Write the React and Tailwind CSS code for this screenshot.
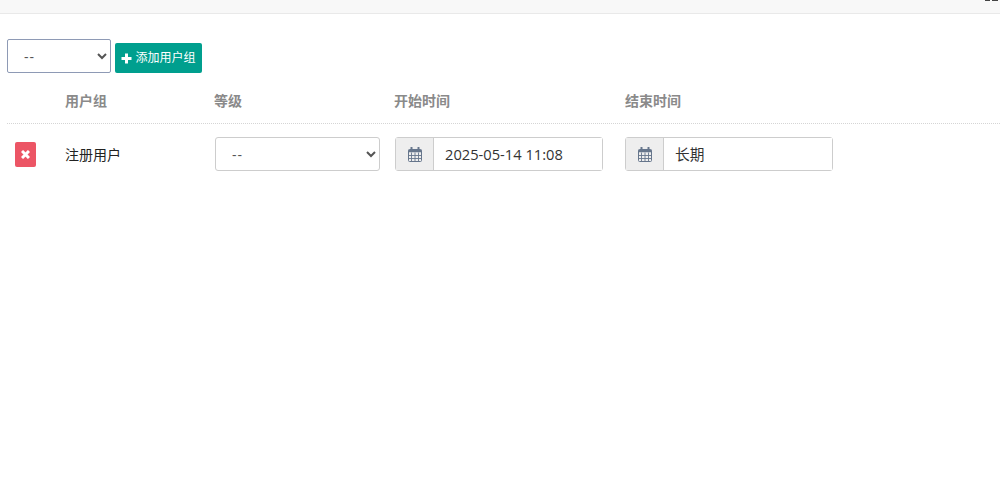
const font = "font-['Open_Sans','Noto_Sans_CJK_SC',sans-serif]"

function CalendarIcon() {
  return (
    <svg width="14" height="15" viewBox="0 0 14 15" fill="none" stroke="#66768c" strokeWidth="1">
      <rect x="0.5" y="2.5" width="13" height="12" rx="1" />
      <path d="M0.5 8.5h13M0.5 11.5h13M3.5 5.5v9M7 5.5v9M10.5 5.5v9" strokeWidth="0.9" />
      <path d="M0.5 4h13" strokeWidth="2.5" />
      <path d="M3.5 0.5v3M10.5 0.5v3" strokeWidth="2" strokeLinecap="round" />
    </svg>
  )
}

function DateField({ value }) {
  return (
    <div className="flex h-[34px] w-[208px] rounded-[3px] border border-[#cdcdcd] bg-white">
      <span className="flex w-[38px] shrink-0 items-center justify-center border-r border-[#cdcdcd] bg-[#eeeeee]">
        <CalendarIcon />
      </span>
      <input
        readOnly
        value={value}
        className="w-full min-w-0 bg-white px-[11px] text-[14.7px] text-[#333] outline-none"
      />
    </div>
  )
}

export default function App() {
  return (
    <div className={`${font} h-[495px] w-[1000px] overflow-hidden bg-white text-[14px]`}>
      <div className="flex h-[14px] items-start justify-end border-b border-[#e9e9e9] bg-[#f8f8f8] pr-[2px]">
        <div className="flex gap-[2px]">
          <span className="h-px w-[5px] bg-[#444]" />
          <span className="h-px w-[6px] bg-[#444]" />
        </div>
      </div>

      <div className="pl-[7px] pt-[25px]">
        <div className="flex h-[34px] items-start gap-[4px]">
          <select className="h-[34px] w-[104px] rounded-[2px] border border-[#8e9ab5] bg-white pl-[12px] text-[14px] tracking-[1px] text-[#555] outline-none">
            <option>--</option>
          </select>
          <button className="mt-[4px] flex h-[30px] w-[87px] items-center justify-center gap-[3px] rounded-[2px] bg-[#009f8e] text-[12px] text-white">
            <svg width="11" height="11" viewBox="0 0 11 11" stroke="white" strokeWidth="3">
              <path d="M5.5 0.5v10M0.5 5.5h10" />
            </svg>
            添加用户组
          </button>
        </div>

        <div className="mt-[7px] grid h-[44px] grid-cols-[50px_150px_180px_230px_1fr] items-center border-b border-dotted border-[#d5d5d5] pb-[3px] font-bold text-[#8a8a8a]">
          <span />
          <span className="pl-[8px]">用户组</span>
          <span className="pl-[7px]">等级</span>
          <span className="pl-[7px]">开始时间</span>
          <span className="pl-[8px]">结束时间</span>
        </div>

        <div className="grid grid-cols-[50px_150px_180px_230px_1fr] items-center pt-[13px]">
          <button className="ml-[8px] flex h-[25px] w-[21px] items-center justify-center rounded-[2px] bg-[#ec5565]">
            <svg width="9" height="9" viewBox="0 0 9 9" stroke="white" strokeWidth="3">
              <path d="M1 1l7 7M8 1l-7 7" />
            </svg>
          </button>
          <span className="pl-[8px] text-[#222]">注册用户</span>
          <div className="pl-[8px]">
            <select className="h-[34px] w-[165px] rounded-[3px] border border-[#cdcdcd] bg-white pl-[12px] text-[14px] tracking-[1px] text-[#555] outline-none">
              <option>--</option>
            </select>
          </div>
          <div className="pl-[8px]">
            <DateField value="2025-05-14 11:08" />
          </div>
          <div className="pl-[8px]">
            <DateField value="长期" />
          </div>
        </div>
      </div>
    </div>
  )
}
